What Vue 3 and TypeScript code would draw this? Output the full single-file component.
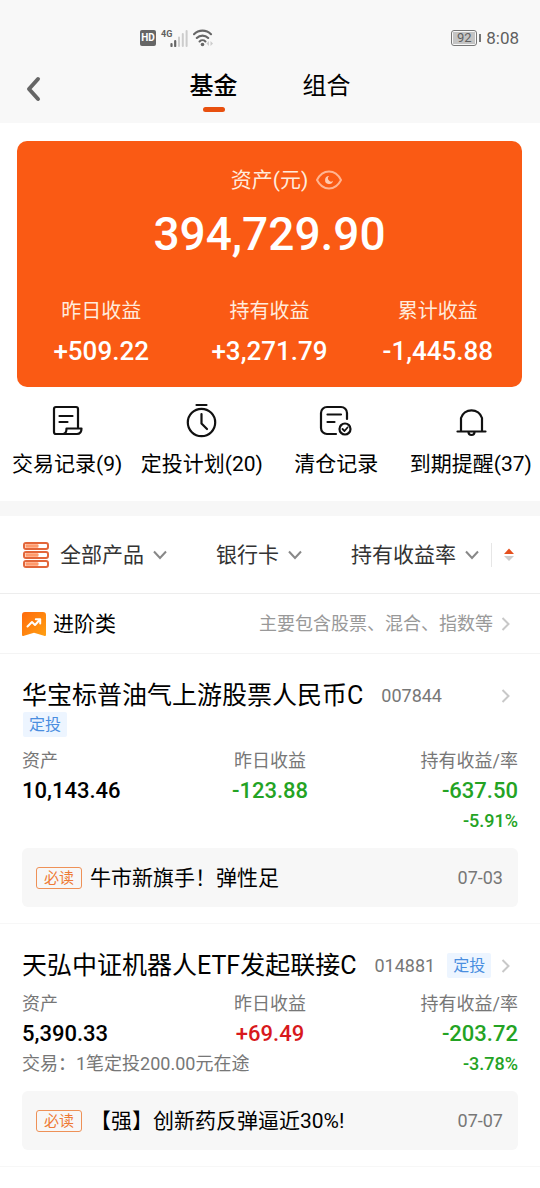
<script setup lang="ts">
import { ref } from 'vue'

interface Fund {
  name: string
  code: string
  tagBelow: boolean
  assets: string
  daily: string
  holding: string
  rate: string
  note: string
  news: string
  date: string
}

const tabs = ['基金', '组合']
const activeTab = ref('基金')

const gains = [
  { label: '昨日收益', value: '+509.22' },
  { label: '持有收益', value: '+3,271.79' },
  { label: '累计收益', value: '-1,445.88' },
]

const shortcuts = [
  { icon: 'record', label: '交易记录(9)' },
  { icon: 'clock', label: '定投计划(20)' },
  { icon: 'cleared', label: '清仓记录' },
  { icon: 'bell', label: '到期提醒(37)' },
]

const funds: Fund[] = [
  {
    name: '华宝标普油气上游股票人民币C',
    code: '007844',
    tagBelow: true,
    assets: '10,143.46',
    daily: '-123.88',
    holding: '-637.50',
    rate: '-5.91%',
    note: '',
    news: '牛市新旗手！弹性足',
    date: '07-03',
  },
  {
    name: '天弘中证机器人ETF发起联接C',
    code: '014881',
    tagBelow: false,
    assets: '5,390.33',
    daily: '+69.49',
    holding: '-203.72',
    rate: '-3.78%',
    note: '交易：1笔定投200.00元在途',
    news: '【强】创新药反弹逼近30%!',
    date: '07-07',
  },
]

const tone = (value: string): string => (value.startsWith('-') ? 'down' : 'up')
</script>

<template>
  <div class="page">
    <header class="top">
      <div class="status">
        <div class="signals">
          <span class="hd">HD</span>
          <span class="net">4G</span>
          <svg class="bars" width="18" height="18" viewBox="0 0 18 18" aria-hidden="true">
            <path d="M1.5 17v-2M5.2 17v-5" stroke="#666" stroke-width="2.2" stroke-linecap="round" />
            <path d="M9 17V8.500M12.800 17V5M16.600 17V2" stroke="#ccc" stroke-width="2" stroke-linecap="round" />
          </svg>
          <svg class="wifi" width="21" height="18" viewBox="0 0 21 18" aria-hidden="true">
            <path d="M1 5.200a12 12 0 0 1 17 0M3.800 9a8 8 0 0 1 11.400 0M6.600 12.400a4.200 4.200 0 0 1 5.800 0" fill="none" stroke="#666" stroke-width="2.100" stroke-linecap="round" />
            <circle cx="9.500" cy="15.500" r="1.800" fill="#666" />
            <path d="M16 12l-2.500 2.500L16 17zM17.500 12l2.500 2.500-2.500 2.500z" fill="#ccc" />
          </svg>
        </div>
        <div class="power">
          <span class="battery"><span class="level">92</span></span>
          <span class="cap"></span>
          <time class="clock">8:08</time>
        </div>
      </div>
      <nav class="nav">
        <button class="back" type="button" aria-label="返回">
          <svg width="16" height="26" viewBox="0 0 16 26" aria-hidden="true">
            <path d="M12 3L3 13l9 10" fill="none" stroke="#666" stroke-width="4" stroke-linecap="round" stroke-linejoin="round" />
          </svg>
        </button>
        <div class="tabs" role="tablist">
          <button
            v-for="tab in tabs"
            :key="tab"
            type="button"
            role="tab"
            class="tab"
            :class="{ active: tab === activeTab }"
            :aria-selected="tab === activeTab"
            @click="activeTab = tab"
          >
            {{ tab }}
          </button>
        </div>
      </nav>
    </header>

    <section class="card">
      <div class="card-title">
        <span>资产(元)</span>
        <button class="eye" type="button" aria-label="隐藏金额">
          <svg width="26" height="20" viewBox="0 0 26 20" aria-hidden="true">
            <path d="M1 10C3.500 5 8 1.500 13 1.500S22.500 5 25 10c-2.500 5-7 8.500-12 8.500S3.500 15 1 10z" fill="none" stroke="#ffb491" stroke-width="2" stroke-linejoin="round" />
            <path d="M13.200 6a4 4 0 1 0 3.800 4.800 2.800 2.800 0 0 1-3.800-4.800z" fill="#ffc9af" />
          </svg>
        </button>
      </div>
      <div class="amount">394,729.90</div>
      <dl class="gains">
        <div v-for="gain in gains" :key="gain.label">
          <dt>{{ gain.label }}</dt>
          <dd>{{ gain.value }}</dd>
        </div>
      </dl>
    </section>

    <nav class="shortcuts">
      <a v-for="item in shortcuts" :key="item.label" href="#" class="shortcut">
        <svg width="34" height="36" viewBox="0 0 34 36" fill="none" stroke="#111" stroke-width="2.200" stroke-linecap="round" stroke-linejoin="round" aria-hidden="true">
          <template v-if="item.icon === 'record'">
            <path d="M28 25V7a2 2 0 0 0-2-2H6a2 2 0 0 0-2 2v23a2 2 0 0 0 2 2h21c2.800 0 4.500-2 4.500-5.500h-15c0 3.500-1 5.500-3.500 5.500" />
            <path d="M9.500 14h13M9.500 20h8" />
          </template>
          <template v-else-if="item.icon === 'clock'">
            <circle cx="16.500" cy="20.500" r="13.700" />
            <path d="M11.500 3h10M16.500 12V21.500l5.500 5.500" />
          </template>
          <template v-else-if="item.icon === 'cleared'">
            <path d="M28 17V11a6 6 0 0 0-6-6H8a6 6 0 0 0-6 6v15a6 6 0 0 0 6 6h9" />
            <path d="M8.500 12.500h13.500M8.500 20h7" />
            <circle cx="26" cy="27" r="5.500" />
            <path d="M23.500 27l2 2 3-3.500" stroke-width="1.800" />
          </template>
          <template v-else>
            <path d="M7 28.500V16a11 11 0 0 1 21 0v12.500M3.500 29.500h28" />
            <path d="M14.500 30a3 3 0 0 0 6 0" />
          </template>
        </svg>
        <span>{{ item.label }}</span>
      </a>
    </nav>

    <section class="filters">
      <div class="filter product">
        <svg width="28" height="28" viewBox="0 0 28 28" aria-hidden="true">
          <g v-for="y in [2, 11, 20]" :key="y">
            <rect x="2" :y="y" width="24" height="6" rx="2" fill="#fff" stroke="#e2663a" stroke-width="2" />
            <rect x="3.500" :y="y + 1.300" width="13" height="3.400" rx="1" fill="#ff9a6c" />
          </g>
        </svg>
        <select aria-label="产品">
          <option>全部产品</option>
        </select>
        <svg class="down-arrow" width="16" height="10" viewBox="0 0 16 10" aria-hidden="true"><path d="M2 1.500l6 6.500 6-6.500" /></svg>
      </div>
      <div class="filter">
        <select aria-label="支付方式">
          <option>银行卡</option>
        </select>
        <svg class="down-arrow" width="16" height="10" viewBox="0 0 16 10" aria-hidden="true"><path d="M2 1.500l6 6.500 6-6.500" /></svg>
      </div>
      <div class="filter">
        <select aria-label="排序依据">
          <option>持有收益率</option>
        </select>
        <svg class="down-arrow" width="16" height="10" viewBox="0 0 16 10" aria-hidden="true"><path d="M2 1.500l6 6.500 6-6.500" /></svg>
        <button class="sort" type="button" aria-label="切换排序">
          <svg width="10" height="14" viewBox="0 0 10 14" aria-hidden="true">
            <path d="M0 6l5-5.500L10 6z" fill="#e5501e" />
            <path d="M0 8l5 5 5-5z" fill="#ccc" />
          </svg>
        </button>
      </div>
    </section>

    <a class="category" href="#">
      <svg width="26" height="26" viewBox="0 0 26 26" aria-hidden="true">
        <defs>
          <linearGradient id="badge" x1="0" y1="0" x2="1" y2="1">
            <stop offset="0" stop-color="#ff6a0c" />
            <stop offset="1" stop-color="#ffa012" />
          </linearGradient>
        </defs>
        <path d="M1 4a3 3 0 0 1 3-3h18a3 3 0 0 1 3 3v19.500c0 1.500-1 1.800-2 1.300l-10-3-10 3c-1 .5-2 .2-2-1.300z" fill="url(#badge)" />
        <path d="M6.500 15.500l4.500-4.500 3 3 5-5.500M14.800 8.200h4.400v4.300" fill="none" stroke="#fff" stroke-width="2" stroke-linecap="round" stroke-linejoin="round" />
      </svg>
      <strong>进阶类</strong>
      <span class="hint">主要包含股票、混合、指数等</span>
      <svg class="right-arrow" width="9" height="14" viewBox="0 0 9 14" aria-hidden="true"><path d="M1.500 1l6 6-6 6" /></svg>
    </a>

    <article v-for="fund in funds" :key="fund.code" class="fund">
      <header class="fund-head">
        <h2>{{ fund.name }}</h2>
        <span class="code">{{ fund.code }}</span>
        <span v-if="!fund.tagBelow" class="plan">定投</span>
        <svg class="right-arrow" width="9" height="14" viewBox="0 0 9 14" aria-hidden="true"><path d="M1.500 1l6 6-6 6" /></svg>
      </header>
      <div v-if="fund.tagBelow" class="plan-row"><span class="plan">定投</span></div>
      <dl class="figures">
        <div>
          <dt>资产</dt>
          <dd>{{ fund.assets }}</dd>
        </div>
        <div>
          <dt>昨日收益</dt>
          <dd :class="tone(fund.daily)">{{ fund.daily }}</dd>
        </div>
        <div>
          <dt>持有收益/率</dt>
          <dd :class="tone(fund.holding)">{{ fund.holding }}</dd>
        </div>
      </dl>
      <div class="extra">
        <span>{{ fund.note }}</span>
        <span class="rate" :class="tone(fund.rate)">{{ fund.rate }}</span>
      </div>
      <a class="news" href="#">
        <span class="must">必读</span>
        <span class="headline">{{ fund.news }}</span>
        <time>{{ fund.date }}</time>
      </a>
    </article>
  </div>
</template>

<style>
body {
  margin: 0;
  background: #fff;
}
</style>

<style scoped>
.page {
  font-family: Roboto, "Noto Sans CJK SC", sans-serif;
  font-size: 21px;
  line-height: 28px;
  color: #000;
}

.page * {
  box-sizing: border-box;
}

svg {
  display: block;
  flex: none;
}

button,
select {
  padding: 0;
  border: 0;
  background: none;
  font: inherit;
  color: inherit;
  appearance: none;
}

a {
  color: inherit;
  text-decoration: none;
}

dl,
dd,
h2 {
  margin: 0;
}

.top {
  background: #f8f8f8;
}

.status {
  display: flex;
  align-items: center;
  justify-content: space-between;
  height: 66px;
  padding: 10px 21px 0 140px;
  color: #5f5f5f;
}

.signals,
.power {
  display: flex;
  align-items: center;
}

.hd {
  width: 16px;
  border-radius: 2px;
  background: #666;
  color: #fff;
  font-size: 10px;
  line-height: 16px;
  font-weight: 700;
  text-align: center;
}

.net {
  align-self: flex-start;
  margin-left: 5px;
  font-size: 9px;
  line-height: 10px;
  font-weight: 700;
}

.bars {
  margin-left: -2px;
}

.wifi {
  margin-left: 5px;
}

.battery {
  width: 26px;
  height: 16px;
  padding: 1px;
  border: 1px solid #777;
  border-radius: 3px;
}

.level {
  display: block;
  background: #c4c4c4;
  font-size: 13px;
  line-height: 12px;
  text-align: center;
}

.cap {
  width: 2px;
  height: 8px;
  margin: 0 5px 0 2px;
  background: #777;
}

.clock {
  font-size: 17px;
  line-height: 20px;
}

.nav {
  display: grid;
  grid-template-columns: 1fr auto 1fr;
  height: 57px;
  padding-left: 26px;
}

.back {
  justify-self: start;
  align-self: start;
  padding-top: 10px;
}

.tabs {
  display: flex;
  gap: 65px;
  padding-right: 26px;
}

.tab {
  display: flex;
  flex-direction: column;
  align-items: center;
  font-size: 24px;
  line-height: 41px;
}

.tab.active {
  font-weight: 500;
}

.tab.active::after {
  content: "";
  width: 22px;
  height: 5px;
  border-radius: 3px;
  background: #e8500f;
}

.card {
  margin: 18px 18px 0 17px;
  padding: 25px 0 20px;
  border-radius: 10px;
  background: #fa5a14;
  color: #fff;
  text-align: center;
}

.card-title {
  display: flex;
  justify-content: center;
  align-items: center;
  gap: 8px;
  padding-left: 34px;
  color: #ffebdc;
}

.amount {
  margin-top: 12px;
  font-size: 46px;
  line-height: 56px;
  font-weight: 500;
}

.gains {
  display: grid;
  grid-template-columns: repeat(3, 1fr);
  margin-top: 35px;
}

.gains dt {
  font-size: 20px;
  color: #ffebdc;
}

.gains dd {
  margin-top: 10px;
  font-size: 26px;
  line-height: 32px;
  font-weight: 500;
}

.shortcuts {
  display: grid;
  grid-template-columns: repeat(4, 1fr);
  height: 114px;
  padding: 15px 2px 0 0;
}

.shortcut {
  display: flex;
  flex-direction: column;
  align-items: center;
  gap: 12px;
  white-space: nowrap;
}

.filters {
  display: flex;
  align-items: center;
  justify-content: space-between;
  height: 93px;
  padding: 0 26px 0 22px;
  border-top: 15px solid #f7f7f7;
  border-bottom: 1px solid #ededed;
  color: #333;
}

.filter {
  display: flex;
  align-items: center;
  gap: 8px;
}

.filter select {
  height: 32px;
  line-height: 32px;
}

.product select {
  margin-left: 2px;
}

.down-arrow,
.right-arrow {
  fill: none;
  stroke: #888;
  stroke-width: 2;
}

.right-arrow {
  stroke: #c8c8c8;
}

.sort {
  display: flex;
  align-items: center;
  height: 24px;
  margin-left: 3px;
  padding-left: 12px;
  border-left: 1px solid #e6e6e6;
}

.category {
  display: flex;
  align-items: center;
  height: 60px;
  padding: 0 30px 0 21px;
  border-bottom: 1px solid #f4f4f4;
}

.category strong {
  margin-left: 6px;
  font-weight: 400;
}

.hint {
  margin: 0 8px 0 auto;
  font-size: 18px;
  color: #999;
}

.fund {
  padding: 26px 22px 16px;
  border-bottom: 1px solid #f7f7f7;
}

.fund-head {
  display: flex;
  align-items: center;
  height: 31px;
  padding-right: 8px;
  white-space: nowrap;
}

.fund-head h2 {
  font-size: 25px;
  font-weight: 400;
  line-height: 32px;
}

.code {
  margin: 0 12px 0 18px;
  font-size: 18px;
  color: #777;
}

.fund-head .right-arrow {
  margin-left: auto;
}

.plan-row {
  display: flex;
  padding: 1px;
}

.plan {
  padding: 0 6px;
  border-radius: 2px;
  background: #edf5ff;
  color: #4a8ee0;
  font-size: 16px;
  line-height: 25px;
}

.figures {
  display: grid;
  grid-template-columns: repeat(3, 1fr);
  margin-top: 11px;
}

.figures > div {
  text-align: center;
}

.figures > div:first-child {
  text-align: left;
}

.figures > div:last-child {
  text-align: right;
}

.figures dt {
  font-size: 18px;
  line-height: 24px;
  color: #777;
}

.figures dd {
  margin-top: 4px;
  font-size: 22px;
  font-weight: 500;
}

.figures .down,
.rate.down {
  color: #24a324;
}

.figures .up,
.rate.up {
  color: #d8191c;
}

.extra {
  display: flex;
  justify-content: space-between;
  margin-top: 4px;
  font-size: 18px;
  line-height: 24px;
  color: #777;
}

.rate {
  font-weight: 500;
}

.news {
  display: flex;
  align-items: center;
  gap: 8px;
  height: 59px;
  margin-top: 15px;
  padding: 0 15px 0 14px;
  border-radius: 6px;
  background: #f7f7f7;
}

.must {
  padding: 0 7px;
  border: 1px solid #ee9157;
  border-radius: 3px;
  color: #ee7a35;
  font-size: 15px;
  line-height: 20px;
}

.news time {
  margin-left: auto;
  font-size: 18px;
  color: #777;
}
</style>
